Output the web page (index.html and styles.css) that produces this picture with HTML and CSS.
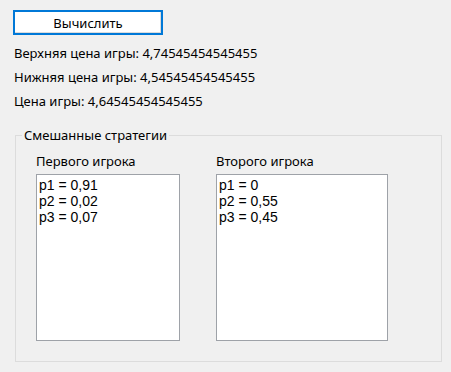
FILE: index.html
```html
<!DOCTYPE html>
<html lang="ru">
<head>
<meta charset="utf-8">
<link rel="stylesheet" href="styles.css">
</head>
<body>
<div class="form">
  <button class="btn" type="button">Вычислить</button>
  <div class="results">
    <div class="row">Верхняя цена игры: 4,74545454545455</div>
    <div class="row">Нижняя цена игры: 4,54545454545455</div>
    <div class="row">Цена игры: 4,64545454545455</div>
  </div>
  <fieldset class="group">
    <legend class="legend">Смешанные стратегии</legend>
    <div class="cols">
      <div class="col col-first">
        <div class="cap">Первого игрока</div>
        <div class="list">
          <div class="item">p1 = 0,91</div>
          <div class="item">p2 = 0,02</div>
          <div class="item">p3 = 0,07</div>
        </div>
      </div>
      <div class="col col-second">
        <div class="cap">Второго игрока</div>
        <div class="list">
          <div class="item">p1 = 0</div>
          <div class="item">p2 = 0,55</div>
          <div class="item">p3 = 0,45</div>
        </div>
      </div>
    </div>
  </fieldset>
</div>
</body>
</html>
```

FILE: styles.css
```css
html, body {
  margin: 0;
  padding: 0;
  background: #f0f0f0;
}
body {
  width: 451px;
  height: 372px;
  overflow: hidden;
  font-family: "Noto Sans", "Open Sans", sans-serif;
  font-size: 13px;
  color: #000;
}
.form {
  display: flex;
  flex-direction: column;
  padding: 10px 0 0 0;
}
.btn {
  margin-left: 13px;
  width: 150px;
  height: 25px;
  box-sizing: border-box;
  border: 2px solid #0078d7;
  background: #fff;
  box-shadow: inset -1px -1px 0 #dcdcdc;
  font-family: inherit;
  font-size: 13px;
  color: #000;
  padding: 0;
}
.results {
  display: flex;
  flex-direction: column;
  gap: 8px;
  padding: 10px 0 0 14px;
}
.row {
  line-height: 16px;
  height: 16px;
}
.group {
  margin: 18px 0 0 15px;
  width: 427px;
  height: 235px;
  box-sizing: border-box;
  border: 1px solid #dcdcdc;
  padding: 0 0 0 20px;
}
.legend {
  margin-left: -14px;
  padding: 0 2px;
  line-height: 16px;
}
.cols {
  display: flex;
  gap: 36px;
  padding-top: 10px;
}
.col {
  display: flex;
  flex-direction: column;
  gap: 5px;
}
.cap {
  line-height: 16px;
}
.list {
  box-sizing: border-box;
  height: 167px;
  background: #fff;
  border: 1px solid #9ea2a8;
  padding: 2px 0 0 2px;
  font-family: "Liberation Sans", Arial, sans-serif;
  font-size: 14px;
}
.col-first .list { width: 144px; }
.col-second .list { width: 172px; }
.item {
  line-height: 16px;
}
```
